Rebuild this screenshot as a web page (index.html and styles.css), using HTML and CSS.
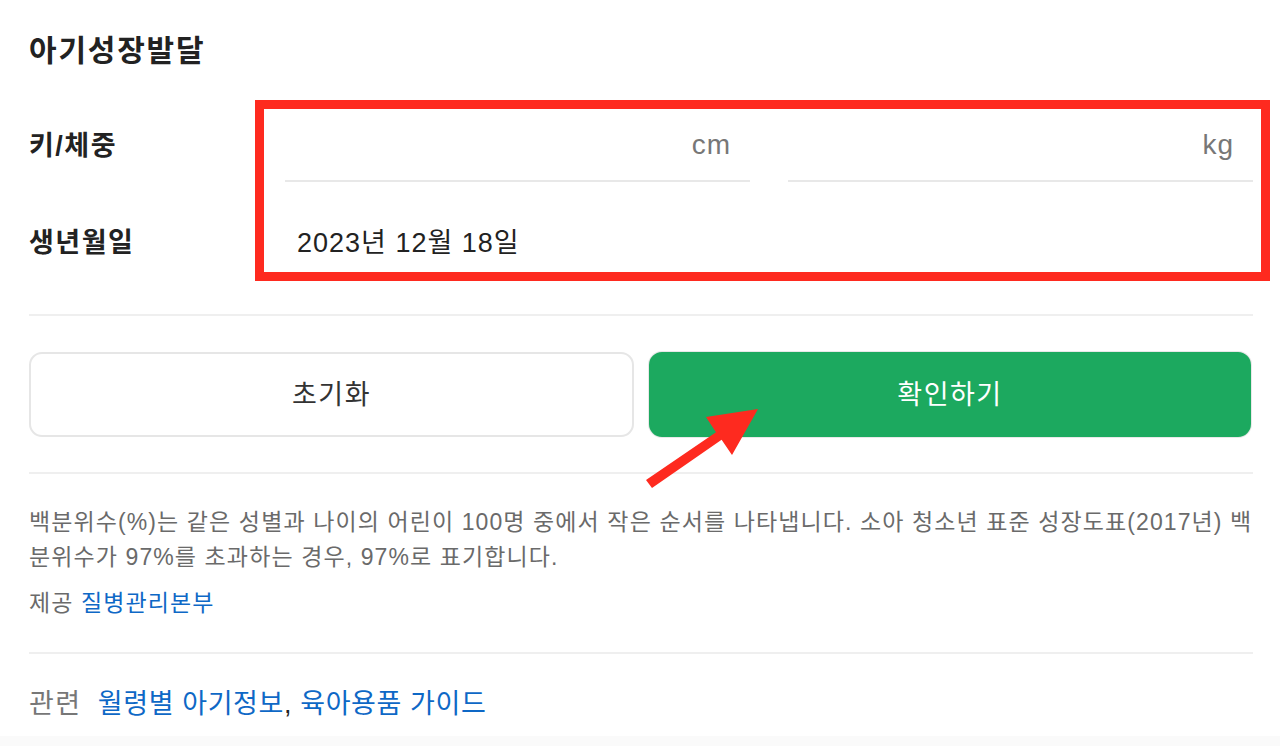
FILE: index.html
```html
<!DOCTYPE html>
<html lang="ko">
<head>
<meta charset="utf-8">
<title>아기성장발달</title>
<link rel="stylesheet" href="styles.css">
</head>
<body>
<div class="page">
  <div class="content">
    <h2 class="title">아기성장발달</h2>

    <div class="form">
      <div class="row row-size">
        <div class="label">키/체중</div>
        <div class="inputs">
          <div class="field"><span class="unit">cm</span></div>
          <div class="field"><span class="unit">kg</span></div>
        </div>
      </div>
      <div class="row row-date">
        <div class="label">생년월일</div>
        <div class="date">2023년 12월 18일</div>
      </div>
    </div>

    <div class="actions">
      <button class="btn btn-reset">초기화</button>
      <button class="btn btn-ok">확인하기</button>
    </div>

    <div class="info">
      <p class="desc">백분위수(%)는 같은 성별과 나이의 어린이 100명 중에서 작은 순서를 나타냅니다. 소아 청소년 표준 성장도표(2017년) 백분위수가 97%를 초과하는 경우, 97%로 표기합니다.</p>
      <p class="source">제공 <a href="#" class="link">질병관리본부</a></p>
    </div>

    <div class="related">
      <span class="related-label">관련</span>
      <a href="#" class="link">월령별 아기정보</a><span class="comma">,</span> <a href="#" class="link">육아용품 가이드</a>
    </div>
  </div>
  <div class="footer-bg"></div>

  <div class="highlight"></div>
  <svg class="arrow" width="1280" height="746" viewBox="0 0 1280 746">
    <polygon fill="#fe2a1f" points="646,480 716,432.3 706,417 758,409 732,455 721.6,439.7 652,488"/>
  </svg>
</div>
</body>
</html>
```

FILE: styles.css
```css
* { box-sizing: border-box; }

html, body {
  margin: 0;
  padding: 0;
  background: #ffffff;
}

body {
  font-family: "Liberation Sans", "Noto Sans CJK KR", sans-serif;
  color: #222222;
}

.page {
  position: relative;
  width: 1280px;
  height: 746px;
  overflow: hidden;
}

.content {
  padding: 0 27px 0 29px;
}

.title {
  margin: 0;
  height: 100px;
  line-height: 102px;
  font-size: 30px;
  font-weight: 600;
  letter-spacing: 1.8px;
  color: #222222;
}

.form {
  border-bottom: 2px solid #efefef;
  padding-bottom: 16px;
}

.row {
  display: flex;
  align-items: center;
}

.label {
  width: 256px;
  flex: none;
  font-size: 27px;
  font-weight: 700;
  line-height: 36px;
  color: #222222;
  letter-spacing: 1.5px;
}

.row-size {
  height: 82px;
  align-items: flex-end;
}

.row-size .label {
  padding-bottom: 18px;
}

.inputs {
  flex: 1;
  display: flex;
  gap: 38px;
  height: 100%;
}

.field {
  flex: 1;
  height: 100%;
  border-bottom: 2px solid #e8e8e8;
  display: flex;
  align-items: flex-end;
  justify-content: flex-end;
  padding: 0 19px 17px 0;
}

.unit {
  font-size: 28px;
  line-height: 36px;
  letter-spacing: 1px;
  color: #777777;
}

.row-date {
  height: 116px;
  padding-top: 6px;
}

.date {
  padding-left: 12px;
  font-size: 27px;
  line-height: 36px;
  color: #222222;
  letter-spacing: 1px;
}

.actions {
  display: grid;
  grid-template-columns: 605px 602px;
  gap: 15px;
  padding: 36px 0 35px;
  border-bottom: 2px solid #efefef;
}

.btn {
  height: 85px;
  border-radius: 13px;
  font-family: "Liberation Sans", "Noto Sans CJK KR", sans-serif;
  font-size: 27px;
  letter-spacing: 1.5px;
  line-height: 36px;
  padding: 0;
  cursor: pointer;
}

.btn-reset {
  background: #ffffff;
  border: 2px solid #e6e6e6;
  color: #333333;
}

.btn-ok {
  background: #1ca95f;
  border: 2px solid #1ca95f;
  color: #ffffff;
  box-shadow: 0 0 0 1px #e8e8e8;
}

.info {
  padding: 31px 0 31px;
  border-bottom: 2px solid #efefef;
}

.desc {
  margin: 0;
  font-size: 23px;
  line-height: 35px;
  color: #6a6a6a;
  letter-spacing: 1.1px;
}

.source {
  margin: 11px 0 0;
  font-size: 23px;
  line-height: 35px;
  letter-spacing: 1.1px;
  color: #6a6a6a;
}

.link {
  color: #0e68c6;
  text-decoration: none;
}

.related {
  padding-top: 32px;
  height: 82px;
  font-size: 27px;
  line-height: 36px;
  letter-spacing: 0.6px;
}

.related-label {
  color: #777777;
  letter-spacing: 1.5px;
  margin-right: 8px;
}

.comma {
  color: #222222;
}

.footer-bg {
  height: 20px;
  background: #fafafa;
}

.highlight {
  position: absolute;
  left: 255px;
  top: 100px;
  width: 1015px;
  height: 181px;
  border: 9px solid #fe2a1f;
  pointer-events: none;
}

.arrow {
  position: absolute;
  left: 0;
  top: 0;
  pointer-events: none;
}
```
